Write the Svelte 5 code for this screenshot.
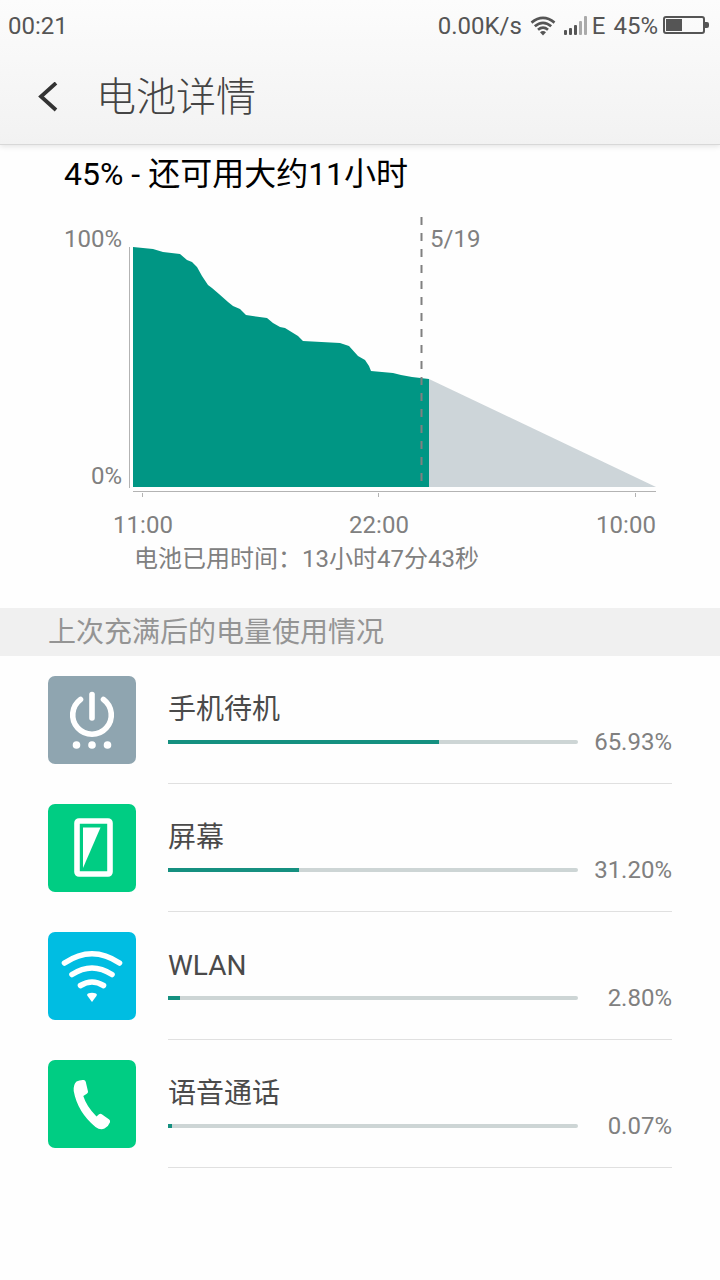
<script>
  const items = [
    { icon: 'standby', name: '手机待机', percent: 65.93 },
    { icon: 'screen', name: '屏幕', percent: 31.2 },
    { icon: 'wlan', name: 'WLAN', percent: 2.8 },
    { icon: 'call', name: '语音通话', percent: 0.07 }
  ];

  // Battery level over time, in chart units.
  const level = [
    [133, 247], [143, 248], [153, 249], [163, 252], [180, 254], [187, 260],
    [192, 262], [197, 267], [202, 276], [208, 285], [212, 288], [219, 294],
    [228, 302], [233, 306], [240, 309], [246, 315], [267, 318], [273, 323],
    [280, 327], [285, 328], [298, 336], [303, 341], [340, 343], [349, 346],
    [358, 356], [365, 360], [369, 366], [371, 371], [393, 373], [401, 375],
    [412, 377], [429, 379], [429, 487], [133, 487]
  ];
  const levelPoints = level.map((p) => p.join(',')).join(' ');

  const hours = [
    { label: '11:00', x: 143, tick: 143 },
    { label: '22:00', x: 379, tick: 379 },
    { label: '10:00', x: 626, tick: 636 }
  ];
</script>

<div class="page">
  <header>
    <div class="status">
      <time>00:21</time>
      <div class="indicators">
        <span>0.00K/s</span>
        <svg class="wifi" width="26" height="20" viewBox="0 0 26 20" aria-hidden="true">
          <g fill="none" stroke="#555" stroke-width="2.7">
            <path d="M1.5 6.6Q13-2.8 24.5 6.6" />
            <path d="M4.8 10.3Q13 3.4 21.2 10.3" />
            <path d="M8 13.8Q13 9.6 18 13.8" />
          </g>
          <path d="M10 16.2Q13 14 16 16.2L13 19.4Z" fill="#555" />
        </svg>
        <svg class="signal" width="24" height="20" viewBox="0 0 24 20" aria-hidden="true">
          <g fill="#555">
            <rect x="0" y="14" width="3" height="5" rx="1" />
            <rect x="5" y="12" width="3" height="7" rx="1" />
            <rect x="10" y="9" width="3" height="10" rx="1" />
          </g>
          <g fill="#aaa">
            <rect x="15" y="5" width="3" height="14" rx="1" />
            <rect x="20" y="0" width="3" height="19" rx="1" />
          </g>
        </svg>
        <span class="network">E</span>
        <span>45%</span>
        <svg class="battery" width="46" height="20" viewBox="0 0 46 20" aria-hidden="true">
          <rect x="1" y="1" width="40" height="16" rx="2" fill="none" stroke="#555" stroke-width="2" />
          <rect x="3" y="3" width="16" height="12" fill="#555" />
          <path d="M42 6h2a2 2 0 0 1 2 2v2a2 2 0 0 1-2 2h-2z" fill="#555" />
        </svg>
      </div>
    </div>
    <div class="title">
      <button aria-label="返回">
        <svg width="24" height="32" viewBox="0 0 24 32">
          <path d="M20 1L5 14.500L20 28" fill="none" stroke="#333" stroke-width="3.8" />
        </svg>
      </button>
      <h1>电池详情</h1>
    </div>
  </header>

  <main>
    <section class="summary">
      <h2>45% - 还可用大约11小时</h2>
      <svg class="chart" viewBox="64 208 592 334" role="img" aria-label="45%">
        <text x="122" y="247" text-anchor="end">100%</text>
        <text x="122" y="484" text-anchor="end">0%</text>
        <text x="430" y="247">5/19</text>
        <polygon points="429,379 656,487 429,487" fill="#cdd5d9" />
        <polygon points={levelPoints} fill="#009684" />
        <path d="M129.5 247V488M133 491.5H656" stroke="#b3b3b3" />
        <path d="M421.5 217V484" stroke="#808080" stroke-width="2" stroke-dasharray="8 8" />
        {#each hours as hour}
          <path d="M{hour.tick - 0.5} 493V497" stroke="#b3b3b3" />
          <text x={hour.x} y="533" text-anchor="middle">{hour.label}</text>
        {/each}
      </svg>
      <p>电池已用时间：13小时47分43秒</p>
    </section>

    <h3>上次充满后的电量使用情况</h3>
    <ul>
      {#each items as item}
        <li>
          <svg class="icon {item.icon}" width="88" height="88" viewBox="0 0 88 88" aria-hidden="true">
            {#if item.icon === 'standby'}
              <g fill="none" stroke="#fff" stroke-width="5.6" stroke-linecap="round">
                <path d="M32.5 23.5A19.3 19.3 0 1 0 55.5 23.5" />
                <path d="M44 18.5V42" />
              </g>
              <g fill="#fff">
                <circle cx="28.5" cy="69" r="3.8" />
                <circle cx="44" cy="69" r="3.8" />
                <circle cx="59.5" cy="69" r="3.8" />
              </g>
            {:else if item.icon === 'screen'}
              <rect x="29" y="17" width="33" height="53" rx="2" fill="none" stroke="#fff" stroke-width="5.6" />
              <path d="M35 23.5H52.5L35 64Z" fill="#fff" />
            {:else if item.icon === 'wlan'}
              <g fill="none" stroke="#fff" stroke-width="5.6" stroke-linecap="round">
                <path d="M16.5 31Q44 12.5 71.5 31" />
                <path d="M24 42.5Q44 29.5 64 42.5" />
                <path d="M32.5 53.5Q44 46.5 55.5 53.5" />
              </g>
              <path d="M40 61.5Q44 60 48 61.5Q49.5 62.3 48.6 63.8L44 70L39.4 63.8Q38.5 62.3 40 61.5Z" fill="#fff" />
            {:else}
              <path d="M28.5 21.5Q32 19.6 36 20Q37.5 20.3 37.8 22L40 31.5Q40.2 33 38.8 33.8L35.3 36Q38.5 46.5 48.5 56.5L51 54.3Q52.3 53.3 53.8 54.2L61.2 59.5Q62.5 60.7 62 62.3Q60.5 66.5 56.5 68.6Q52 70.3 47.5 67Q29.5 52 25.7 31Q25.2 24.5 28.5 21.5Z" fill="#fff" />
            {/if}
          </svg>
          <div class="usage">
            <label for={item.icon}>{item.name}</label>
            <div class="meter">
              <progress id={item.icon} max="100" value={Math.ceil(item.percent)}></progress>
              <span>{item.percent.toFixed(2)}%</span>
            </div>
          </div>
        </li>
      {/each}
    </ul>
  </main>
</div>

<style>
  :global(body) {
    margin: 0;
    background: #fefefe;
  }

  .page {
    font-family: Roboto, 'Noto Sans CJK SC', sans-serif;
    font-size: 24px;
    color: #808080;
  }

  h1, h2, h3, p, ul {
    margin: 0;
    padding: 0;
    font-weight: 400;
  }

  header {
    background: linear-gradient(#fcfcfc, #f2f2f2);
    border-bottom: 1px solid #d8d8d8;
    box-shadow: 0 2px 5px #00000018;
  }

  .status {
    display: flex;
    justify-content: space-between;
    align-items: center;
    height: 52px;
    padding: 0 11px 0 8px;
    color: #555;
  }

  .indicators {
    display: flex;
    align-items: center;
  }

  .wifi {
    margin-left: 8px;
  }

  .signal {
    margin: 0 4px 0 8px;
  }

  .network {
    margin-right: 8px;
  }

  .battery {
    margin-left: 5px;
  }

  .title {
    display: flex;
    align-items: center;
    height: 92px;
  }

  button {
    display: flex;
    padding: 8px 36px;
    border: 0;
    background: none;
    cursor: pointer;
  }

  h1 {
    font-size: 40px;
    line-height: 48px;
    font-weight: 300;
    color: #444;
  }

  .summary {
    padding: 7px 64px 32px;
  }

  h2 {
    font-size: 32px;
    line-height: 44px;
    color: #000;
  }

  .chart {
    display: block;
    width: 100%;
    margin-top: 12px;
    fill: #808080;
  }

  p {
    padding-left: 70px;
    line-height: 34px;
  }

  h3 {
    padding: 2px 48px 0;
    background: #f0f0f0;
    color: #949494;
    font-size: 28px;
    line-height: 46px;
  }

  ul {
    list-style: none;
  }

  li {
    display: flex;
    gap: 32px;
    padding: 0 48px;
  }

  .icon {
    flex: none;
    margin: 20px 0;
    border-radius: 7px;
    background: #00cd83;
  }

  .standby {
    background: #8fa5b0;
  }

  .wlan {
    background: #00bde2;
  }

  .usage {
    flex: 1;
    display: flex;
    flex-direction: column;
    padding-top: 36px;
    border-bottom: 1px solid #e0e0e0;
  }

  label {
    font-size: 28px;
    line-height: 36px;
    color: #4a4a4a;
  }

  .meter {
    display: flex;
    align-items: center;
    line-height: 28px;
  }

  .meter span {
    width: 94px;
    text-align: right;
  }

  progress {
    appearance: none;
    flex: 1;
    min-width: 0;
    height: 4px;
    border: 0;
    border-radius: 0 2px 2px 0;
    overflow: hidden;
    background: #cdd5d5;
  }

  progress::-webkit-progress-bar {
    background: #cdd5d5;
  }

  progress::-webkit-progress-value {
    background: #159080;
  }
</style>
